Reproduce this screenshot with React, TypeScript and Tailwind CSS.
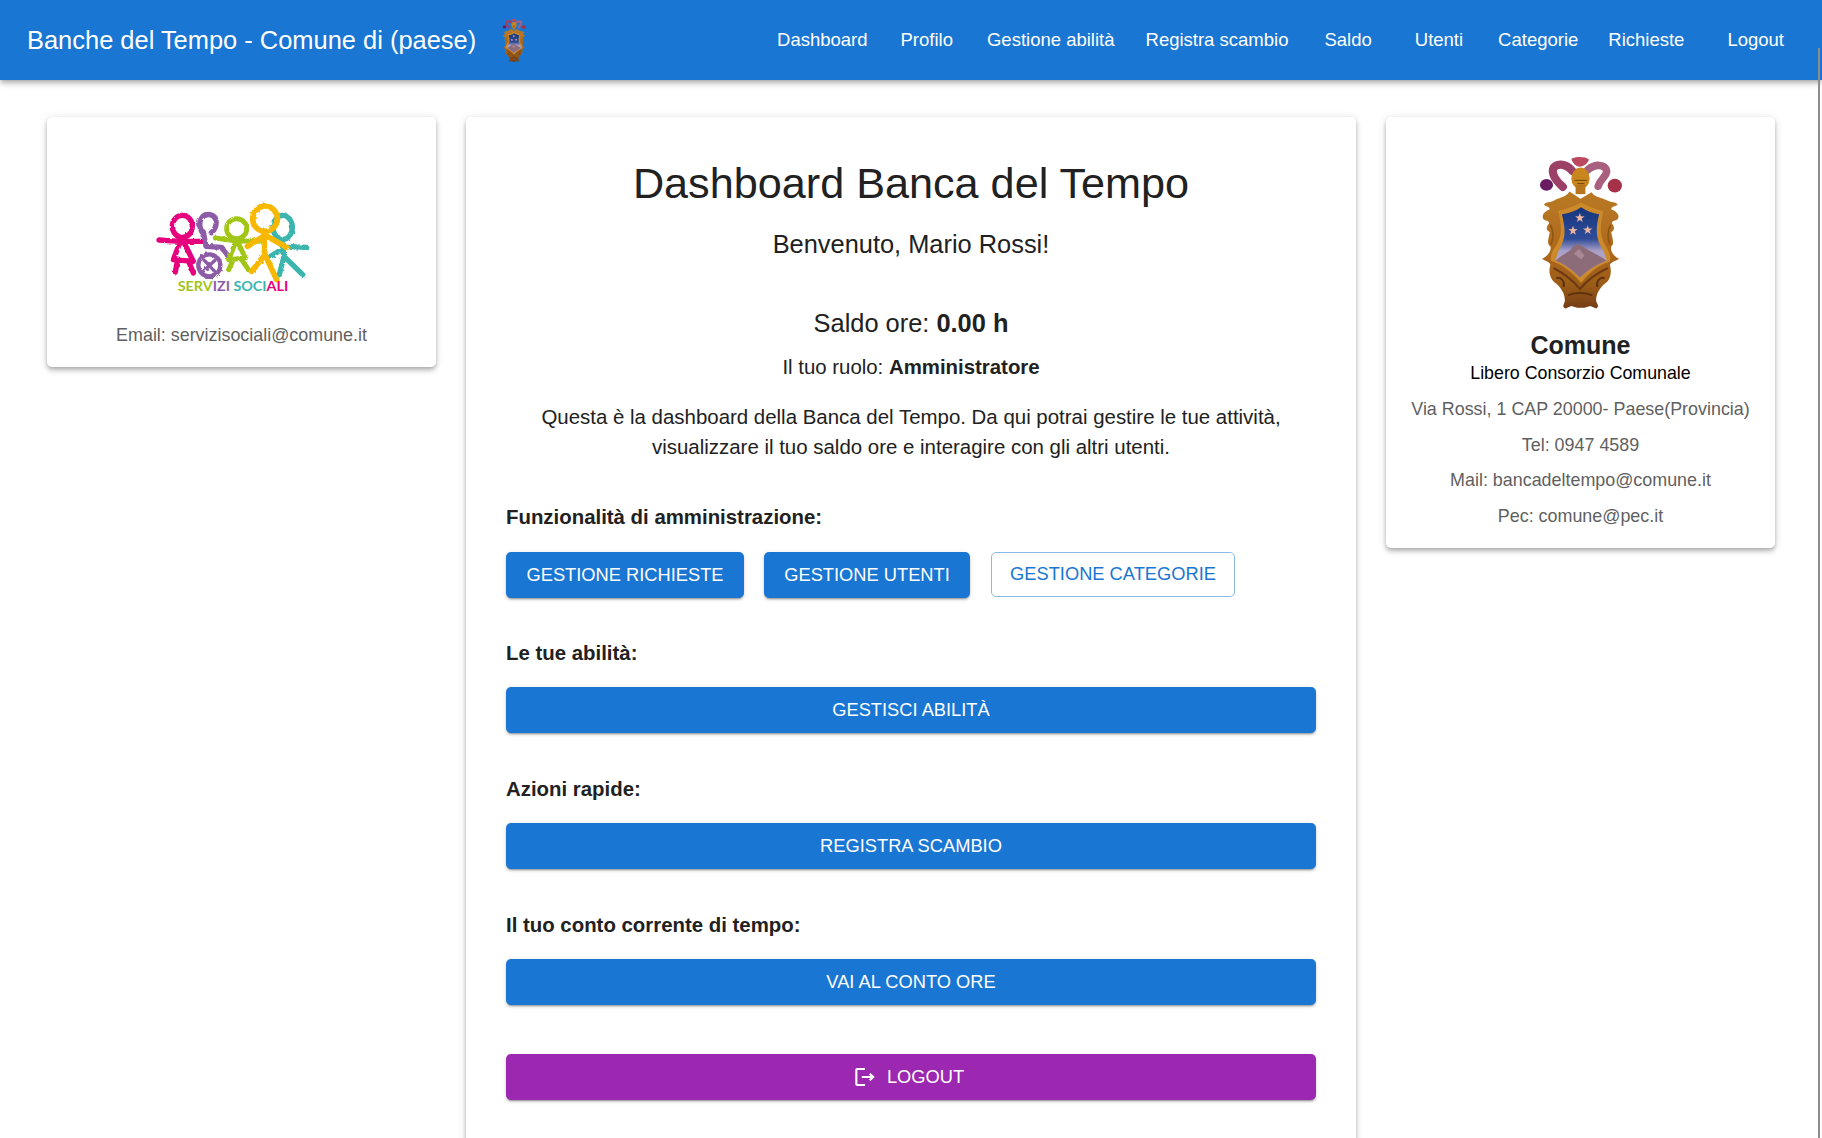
const NAV: Array<{ label: string; spacing: string }> = [
  { label: "Dashboard", spacing: "" },
  { label: "Profilo", spacing: "ml-[33px]" },
  { label: "Gestione abilità", spacing: "ml-[34px]" },
  { label: "Registra scambio", spacing: "ml-[31px]" },
  { label: "Saldo", spacing: "ml-[36px]" },
  { label: "Utenti", spacing: "ml-[43px]" },
  { label: "Categorie", spacing: "ml-[35px]" },
  { label: "Richieste", spacing: "ml-[30px]" },
  { label: "Logout", spacing: "ml-[43px]" },
]

const CONTACTS = [
  "Via Rossi, 1 CAP 20000- Paese(Provincia)",
  "Tel: 0947 4589",
  "Mail: bancadeltempo@comune.it",
  "Pec: comune@pec.it",
]

const CARD_SHADOW = "shadow-[0_2px_4px_-1px_rgba(0,0,0,0.2),0_4px_5px_0_rgba(0,0,0,0.14),0_1px_10px_0_rgba(0,0,0,0.12)]"
const BUTTON_SHADOW = "shadow-[0_3px_1px_-2px_rgba(0,0,0,0.2),0_2px_2px_0_rgba(0,0,0,0.14),0_1px_5px_0_rgba(0,0,0,0.12)]"

function Star({ x, y }: { x: number; y: number }) {
  const pts = Array.from({ length: 10 }, (_, i) => {
    const r = i % 2 === 0 ? 15 : 6
    const a = (Math.PI / 5) * i - Math.PI / 2
    return `${x + r * Math.cos(a)},${y + r * Math.sin(a)}`
  }).join(" ")
  return <polygon points={pts} fill="#efb4a2" />
}

function Crest({ className, id }: { className: string; id: string }) {
  return (
    <svg viewBox="80 25 260 480" className={className}>
      <defs>
        <linearGradient id={`${id}-sky`} x1="0" y1="0" x2="0" y2="1">
          <stop offset="0" stopColor="#16367c" />
          <stop offset="0.45" stopColor="#2f4c98" />
          <stop offset="0.62" stopColor="#a9a0c8" />
          <stop offset="1" stopColor="#c4b2c2" />
        </linearGradient>
        <linearGradient id={`${id}-gold`} x1="0" y1="0" x2="0" y2="1">
          <stop offset="0" stopColor="#b97a24" />
          <stop offset="0.55" stopColor="#ad671c" />
          <stop offset="0.8" stopColor="#9a5c18" />
          <stop offset="1" stopColor="#743c14" />
        </linearGradient>
        <filter id={`${id}-soft`}>
          <feGaussianBlur stdDeviation="1.4" />
        </filter>
      </defs>
      <g filter={`url(#${id}-soft)`}>
        {/* pennacchi */}
        <path d="M186 76 C165 50 132 50 126 70 C122 88 138 108 156 124" fill="none" stroke="#9c3f68" strokeWidth="25" strokeLinecap="round" />
        <path d="M232 72 C254 52 288 54 290 76 C290 92 270 100 264 122" fill="none" stroke="#a8607e" strokeWidth="23" strokeLinecap="round" />
        <ellipse cx="106" cy="118" rx="20" ry="18" fill="#6a1a62" />
        <ellipse cx="315" cy="120" rx="22" ry="21" fill="#a5314a" />
        <path d="M182 38 C195 30 225 30 236 40 C232 54 218 62 207 62 C196 62 186 52 182 38 Z" fill="#bb4a5e" />
        {/* elmo */}
        <ellipse cx="210" cy="98" rx="28" ry="33" fill="#c8861f" />
        <rect x="195" y="118" width="30" height="28" fill="#b8761c" />
        <path d="M192 104 H230 M200 114 L222 114" stroke="#6e4310" strokeWidth="3" />
        {/* cornice */}
        <path d="M176 138 L210 160 L244 140 C254 156 270 154 294 166 C304 172 318 168 324 178 C316 186 306 182 304 192 C318 198 332 208 324 222 C316 230 308 224 306 236 C314 244 316 256 304 262 C306 280 316 296 304 306 C300 322 314 338 328 344 C318 352 308 350 300 362 C306 384 302 404 290 416 C272 428 256 452 258 474 C262 484 268 490 258 496 L240 488 L222 494 L200 494 L182 488 L164 496 C152 490 160 484 162 474 C164 452 148 428 130 416 C114 400 112 380 118 362 C112 350 102 352 92 344 C106 338 122 322 118 306 C104 296 114 280 116 262 C102 256 106 244 114 236 C112 224 104 230 96 222 C90 208 102 198 116 192 C114 182 104 186 98 178 C104 168 118 172 128 166 C150 154 166 156 176 138 Z" fill={`url(#${id}-gold)`} />
        <path d="M142 198 C165 192 192 184 212 172 C232 184 256 192 280 198 C270 240 268 268 282 296 C298 320 304 336 300 352 C268 362 238 384 212 418 C184 384 154 362 120 350 C116 334 124 318 140 296 C154 268 152 240 142 198 Z" fill="#cc8a2c" />
        {/* scudo */}
        <path d="M153 208 C175 204 196 198 212 186 C228 198 246 204 267 208 C258 244 256 272 270 302 C280 320 288 336 290 350 C262 360 232 378 208 402 C186 378 160 360 134 350 C136 336 142 320 152 302 C166 272 162 244 153 208 Z" fill={`url(#${id}-sky)`} />
        <path d="M134 350 C150 334 168 326 180 316 C188 304 200 296 208 300 C216 304 228 316 244 322 C262 332 278 340 290 350 C262 360 232 378 208 402 C186 378 160 360 134 350 Z" fill="#8d6c7a" />
        <path d="M190 328 L206 314 L222 334 L212 346 Z" fill="#a98893" />
        {/* base */}
        <path d="M128 372 C150 384 186 408 208 436 C232 408 268 384 294 372" fill="none" stroke="#6e3a12" strokeWidth="7" />
        <path d="M136 404 C150 396 164 416 158 430 M284 404 C270 396 256 416 262 430 M172 456 C190 446 226 446 246 456" fill="none" stroke="#5f3110" strokeWidth="6" />
        <path d="M118 240 C128 260 128 280 120 300 M302 240 C292 260 292 280 300 300" fill="none" stroke="#8d5416" strokeWidth="5" />
        <Star x={208} y={219} />
        <Star x={187} y={258} />
        <Star x={232} y={256} />
      </g>
    </svg>
  )
}

function ServiziLogo() {
  return (
    <svg viewBox="0 0 600 360" className="mr-[3px] h-[120px] w-[200px]">
      <defs>
        <filter id="crayon" x="-5%" y="-5%" width="110%" height="110%">
          <feTurbulence type="fractalNoise" baseFrequency="0.09" numOctaves="2" seed="4" />
          <feDisplacementMap in="SourceGraphic" scale="9" />
          <feGaussianBlur stdDeviation="0.8" />
        </filter>
      </defs>
      <g fill="none" strokeLinecap="round" strokeLinejoin="round" filter="url(#crayon)" transform="translate(0 4)">
        <g stroke="#3ab5ae" strokeWidth="16">
          <ellipse cx="428" cy="108" rx="29" ry="36" />
          <path d="M425 145 L432 195 M392 195 L440 165 L500 168 M432 195 L418 250 M432 195 L488 250" />
        </g>
        <g stroke="#e6007e" strokeWidth="16">
          <ellipse cx="127" cy="105" rx="30" ry="33" />
          <path d="M57 146 L120 150 L192 150 M125 140 L100 205 L160 210 Z M112 210 L106 242 M146 210 L160 245" />
        </g>
        <g stroke="#8d5ba6" strokeWidth="16">
          <path d="M186 122 C168 88 190 66 210 70 C236 76 232 108 214 124" />
          <path d="M190 122 L198 165 L245 168 L272 205" />
          <circle cx="208" cy="222" r="33" strokeWidth="13" />
          <path d="M192 206 L224 240 M226 206 L190 240" strokeWidth="10" />
        </g>
        <g stroke="#a2c617" strokeWidth="15">
          <ellipse cx="290" cy="112" rx="30" ry="30" />
          <path d="M226 140 L285 148 L362 150 M290 145 L266 205 L316 200 Z M280 205 L266 235 M305 205 L325 235" />
        </g>
        <g stroke="#f9b800" strokeWidth="17">
          <ellipse cx="375" cy="82" rx="37" ry="38" />
          <path d="M372 122 L375 190 M322 165 L375 132 L440 168 M375 190 L335 240 M375 190 L410 265" />
        </g>
      </g>
      <text x="113" y="302" fontFamily="Lato, sans-serif" fontSize="38" fontWeight="700" textLength="332" lengthAdjust="spacingAndGlyphs">
        <tspan fill="#a2c617">SERV</tspan>
        <tspan fill="#8d5ba6">IZI </tspan>
        <tspan fill="#3ab5ae">SOCI</tspan>
        <tspan fill="#e6007e">ALI</tspan>
      </text>
    </svg>
  )
}

function PrimaryButton({ children }: { children: React.ReactNode }) {
  return (
    <button className={`mt-[21.5px] flex h-[46px] w-full items-center justify-center rounded-[5px] bg-[#1976d2] text-[18.3px] text-white ${BUTTON_SHADOW}`}>
      {children}
    </button>
  )
}

function SectionTitle({ children, spacing }: { children: React.ReactNode; spacing: string }) {
  return <p className={`${spacing} text-[20.4px] font-bold leading-[26px] text-[#212121]`}>{children}</p>
}

export default function App() {
  return (
    <div className="relative h-[1138px] overflow-hidden bg-white font-['Liberation_Sans',Arial,sans-serif] text-[#212121]">
      <header className={`relative z-10 flex h-[80px] items-center justify-between bg-[#1976d2] pr-[38px] pl-[27px] text-white ${CARD_SHADOW}`}>
        <div className="flex items-center">
          <span className="mt-[2px] text-[25.45px] leading-none">Banche del Tempo - Comune di (paese)</span>
          <Crest id="small" className="ml-[26px] h-[45px] w-[24px]" />
        </div>
        <nav className="flex items-center">
          {NAV.map((item) => (
            <a key={item.label} className={`${item.spacing} text-[18.5px] leading-none`}>
              {item.label}
            </a>
          ))}
        </nav>
      </header>

      <main className="flex items-start gap-[30px] pt-[37px] pr-[46px] pl-[47px]">
        <aside className={`flex w-[389px] shrink-0 flex-col items-center rounded-[5px] bg-white pt-[73px] pb-[20px] ${CARD_SHADOW}`}>
          <ServiziLogo />
          <p className="mt-[13px] text-[17.9px] leading-[24px] text-[#5f5f5f]">Email: servizisociali@comune.it</p>
        </aside>

        <section className={`w-[890px] shrink-0 rounded-[5px] bg-white px-[40px] pt-[41px] pb-[60px] ${CARD_SHADOW}`}>
          <div className="text-center">
            <h1 className="text-[43.2px] leading-[50px] font-normal">Dashboard Banca del Tempo</h1>
            <p className="mt-[21px] text-[25.4px] leading-[30px]">Benvenuto, Mario Rossi!</p>
            <p className="mt-[49px] text-[25.4px] leading-[30px]">
              Saldo ore: <b>0.00 h</b>
            </p>
            <p className="mt-[16px] text-[20.4px] leading-[26px]">
              Il tuo ruolo: <b>Amministratore</b>
            </p>
            <p className="mt-[22px] text-[20.45px] leading-[30px]">
              Questa è la dashboard della Banca del Tempo. Da qui potrai gestire le tue attività,
              <br />
              visualizzare il tuo saldo ore e interagire con gli altri utenti.
            </p>
          </div>

          <SectionTitle spacing="mt-[42px]">Funzionalità di amministrazione:</SectionTitle>
          <div className="mt-[22px] flex gap-[20px] text-[18.3px]">
            <button className={`h-[46px] w-[238px] rounded-[5px] bg-[#1976d2] text-white ${BUTTON_SHADOW}`}>
              GESTIONE RICHIESTE
            </button>
            <button className={`h-[46px] w-[206px] rounded-[5px] bg-[#1976d2] text-white ${BUTTON_SHADOW}`}>
              GESTIONE UTENTI
            </button>
            <button className="ml-[1px] h-[45px] w-[244px] rounded-[5px] border border-[#8cbae8] bg-white pb-[2px] text-[#1976d2]">
              GESTIONE CATEGORIE
            </button>
          </div>

          <SectionTitle spacing="mt-[41.5px]">Le tue abilità:</SectionTitle>
          <PrimaryButton>GESTISCI ABILITÀ</PrimaryButton>

          <SectionTitle spacing="mt-[42.5px]">Azioni rapide:</SectionTitle>
          <PrimaryButton>REGISTRA SCAMBIO</PrimaryButton>

          <SectionTitle spacing="mt-[42.5px]">Il tuo conto corrente di tempo:</SectionTitle>
          <PrimaryButton>VAI AL CONTO ORE</PrimaryButton>

          <button className={`mt-[49px] flex h-[46px] w-full items-center justify-center rounded-[5px] bg-[#9c27b0] text-[18.3px] text-white ${BUTTON_SHADOW}`}>
            <svg viewBox="0 0 24 24" preserveAspectRatio="none" className="mr-[9px] -ml-[6px] h-[24px] w-[26px] fill-current">
              <path d="m17 8-1.41 1.41L17.17 11H9v2h8.17l-1.58 1.58L17 16l4-4zM5 5h7V3H5c-1.1 0-2 .9-2 2v14c0 1.1.9 2 2 2h7v-2H5z" />
            </svg>
            LOGOUT
          </button>
        </section>

        <aside className={`flex w-[389px] shrink-0 flex-col items-center rounded-[5px] bg-white pt-[37px] pb-[20px] text-center ${CARD_SHADOW}`}>
          <Crest id="large" className="h-[158px] w-[85px]" />
          <h2 className="mt-[19px] text-[25px] leading-[28px] font-bold">Comune</h2>
          <p className="mt-[1px] text-[17.8px] leading-[26px] text-black">Libero Consorzio Comunale</p>
          <div className="mt-[11px] flex flex-col gap-[11.5px] text-[17.9px] leading-[24px] text-[#5f5f5f]">
            {CONTACTS.map((line) => (
              <p key={line}>{line}</p>
            ))}
          </div>
        </aside>
      </main>

      <div className="absolute top-[48px] right-[2px] bottom-0 z-20 w-[2px] bg-[#8c8c8c]" />
    </div>
  )
}
